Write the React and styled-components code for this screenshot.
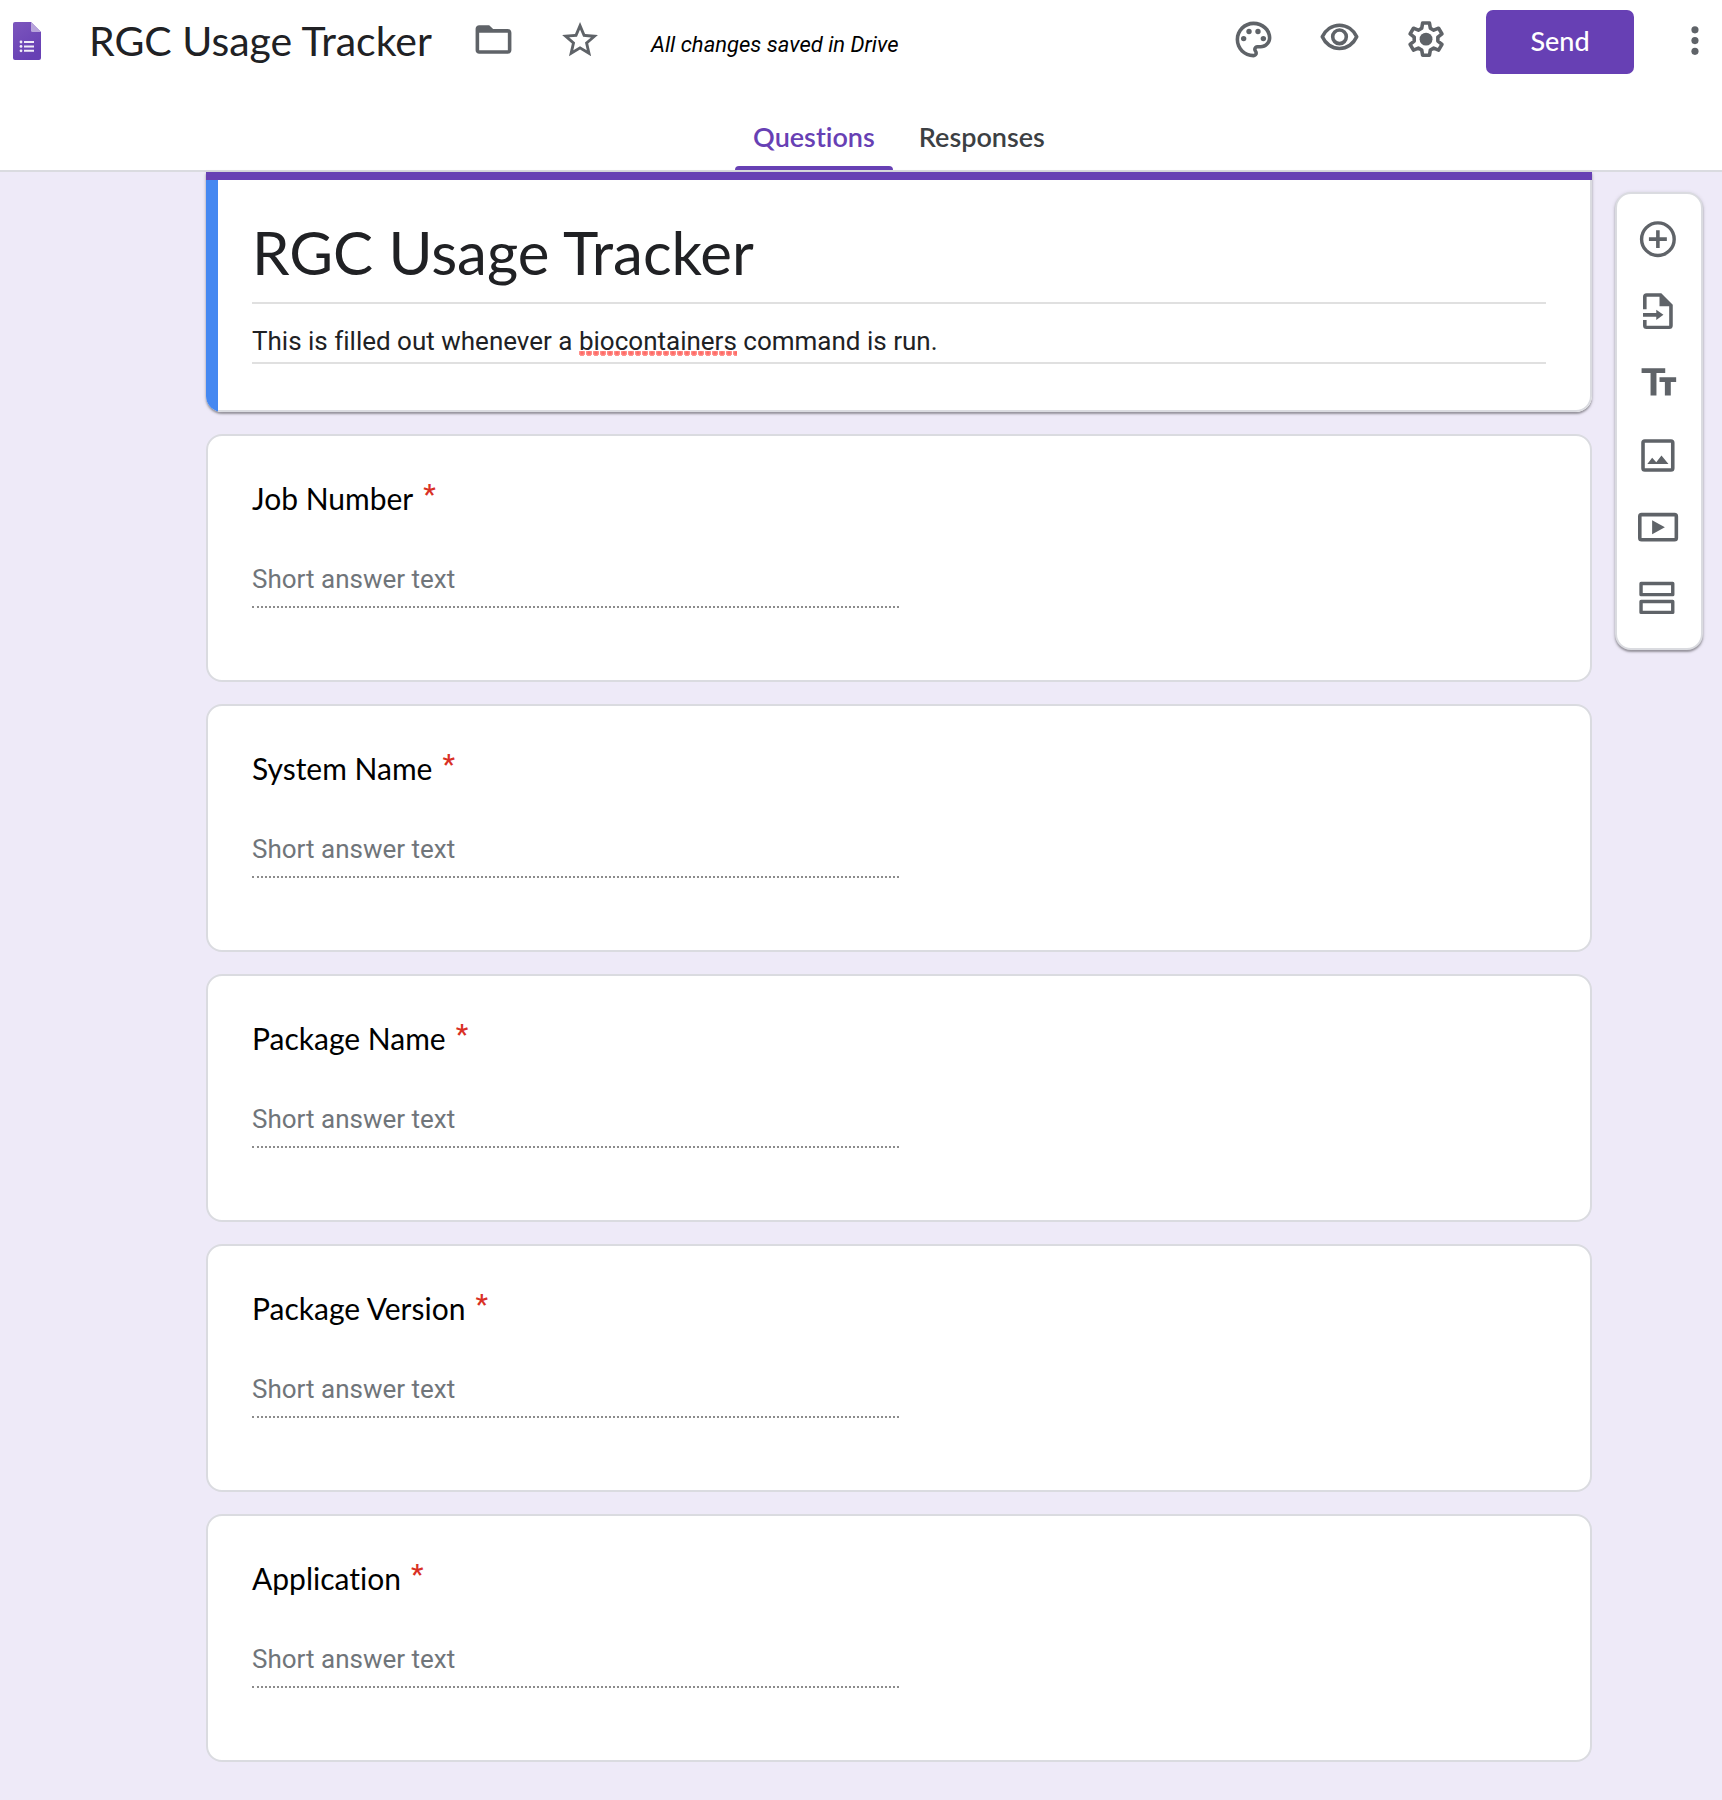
import React, { useState } from "react";
import styled, { createGlobalStyle, ThemeProvider } from "styled-components";

const theme = {
  purple: "#6740b4",
  blue: "#4588f1",
  canvas: "#eeeaf8",
  line: "#dadbe0",
  icon: "#5f6368",
  ink: "#202124",
  display: '"Lato", "Roboto", sans-serif',
  text: '"Roboto", "Liberation Sans", sans-serif',
};

const GlobalStyle = createGlobalStyle`
  *, *::before, *::after { box-sizing: border-box; }
  body {
    margin: 0;
    background: ${theme.canvas};
    font-family: ${theme.text};
    font-variant-ligatures: none;
  }
  button, input {
    font: inherit;
    font-variant-ligatures: none;
  }
`;

const Page = styled.div`
  min-height: 100vh;
  background: ${(p) => p.theme.canvas};
`;

/* ---------- app bar ---------- */

const AppBar = styled.header`
  background: #fff;
  border-bottom: 2px solid ${(p) => p.theme.line};
`;

const TopRow = styled.div`
  display: flex;
  align-items: flex-start;
  padding: 10px 0 0 13px;
`;

const HomeLink = styled.a`
  display: flex;
  align-items: center;
  width: 76px;
  height: 58px;
  padding-bottom: 4px;
  padding-top: 8px;
`;

const DocName = styled.input`
  width: 361px;
  height: 58px;
  padding: 2px 0 0;
  border: 0;
  outline: 0;
  background: transparent;
  color: ${(p) => p.theme.ink};
  font-family: ${(p) => p.theme.display};
  font-size: 41px;
`;

const IconButton = styled.button`
  display: flex;
  align-items: center;
  justify-content: center;
  flex: none;
  width: ${(p) => p.$width || 86}px;
  height: ${(p) => p.$height || 58}px;
  padding: 0;
  border: 0;
  background: transparent;
  color: ${(p) => p.theme.icon};
  cursor: pointer;
`;

const SaveStatus = styled.span`
  padding: 6px 0 0 29px;
  line-height: 58px;
  font-size: 22px;
  font-style: italic;
  color: #000;
  white-space: nowrap;
`;

const Actions = styled.div`
  display: flex;
  align-items: flex-start;
  margin-left: auto;
`;

const SendButton = styled.button`
  width: 148px;
  height: 64px;
  margin: 0 34px 0 18px;
  padding: 0 0 4px;
  border: 0;
  border-radius: 7px;
  background: ${(p) => p.theme.purple};
  color: #fff;
  font-family: ${(p) => p.theme.display};
  font-size: 27px;
  font-weight: 500;
  cursor: pointer;
`;

const Tabs = styled.nav`
  display: flex;
  justify-content: center;
  gap: 8px;
  margin-top: 28px;
  padding-left: 76px;
`;

const Tab = styled.button`
  position: relative;
  height: 68px;
  padding: 0 18px;
  border: 0;
  background: transparent;
  color: ${(p) => (p.$active ? p.theme.purple : "#3c4043")};
  font-family: ${(p) => p.theme.display};
  font-size: 27px;
  font-weight: 600;
  cursor: pointer;

  &::after {
    content: "";
    display: ${(p) => (p.$active ? "block" : "none")};
    position: absolute;
    left: 0;
    right: 0;
    bottom: 0;
    height: 4px;
    border-radius: 4px 4px 0 0;
    background: ${(p) => p.theme.purple};
  }
`;

/* ---------- form canvas ---------- */

const Canvas = styled.main`
  display: flex;
  align-items: flex-start;
  gap: 23px;
  padding: 0 19px 38px 206px;
`;

const Column = styled.div`
  flex: 1;
  min-width: 0;
  display: flex;
  flex-direction: column;
  gap: 22px;
`;

const FormHeader = styled.section`
  border-radius: 0 0 16px 16px;
  background: #fff;
  box-shadow: 0 2px 2px rgba(0, 0, 0, 0.3), 0 1px 4px rgba(0, 0, 0, 0.14);
  overflow: hidden;
`;

const ThemeBar = styled.div`
  height: 8px;
  background: ${(p) => p.theme.purple};
`;

const HeaderInner = styled.div`
  display: flex;
`;

const SelectedBar = styled.div`
  flex: none;
  width: 12px;
  background: ${(p) => p.theme.blue};
`;

const HeaderBody = styled.div`
  flex: 1;
  min-width: 0;
  padding: 38px 44px 46px 34px;
  border: solid ${(p) => p.theme.line};
  border-width: 0 2px 2px 0;
  border-bottom-right-radius: 16px;
`;

const FormTitle = styled.input`
  display: block;
  width: 100%;
  height: 86px;
  padding: 0 0 16px;
  border: 0;
  border-bottom: 2px solid #e0e0e0;
  outline: 0;
  background: transparent;
  color: ${(p) => p.theme.ink};
  font-family: ${(p) => p.theme.display};
  font-size: 60px;
`;

const Description = styled.div`
  margin-top: 22px;
  padding-bottom: 6px;
  border-bottom: 2px solid #e0e0e0;
  outline: 0;
  color: ${(p) => p.theme.ink};
  font-size: 26px;
  line-height: 30px;
`;

const Misspelled = styled.span`
  background: radial-gradient(circle at 3px 2px, #ff6b66 1px, #ff9a96 3px, transparent 3px) left bottom / 7px 5px repeat-x;
`;

const QuestionCard = styled.section`
  padding: 42px 44px 72px;
  border: 2px solid ${(p) => p.theme.line};
  border-radius: 16px;
  background: #fff;
`;

const QuestionLabel = styled.label`
  display: flex;
  align-items: flex-start;
  gap: 10px;
  color: #000;
  font-family: ${(p) => p.theme.display};
  font-size: 30px;
  line-height: 40px;
`;

const Required = styled.span`
  color: #d93025;
  font-family: ${(p) => p.theme.text};
  font-size: 28px;
  font-weight: 500;
  line-height: 34px;
`;

const ShortAnswer = styled.input`
  display: block;
  width: 50%;
  height: 44px;
  margin-top: 46px;
  padding: 0 0 12px;
  border: 0;
  border-bottom: 2px dotted #8c8c8c;
  border-radius: 0;
  outline: 0;
  background: transparent;
  font-size: 26px;

  &::placeholder {
    color: #70757a;
    opacity: 1;
  }
`;

const SideTools = styled.aside`
  display: flex;
  flex-direction: column;
  align-items: center;
  flex: none;
  width: 88px;
  margin-top: 20px;
  padding: 9px 0 13px;
  border: 2px solid ${(p) => p.theme.line};
  border-radius: 16px;
  background: #fff;
  box-shadow: 0 2px 2px rgba(0, 0, 0, 0.3), 0 1px 4px rgba(0, 0, 0, 0.14);
`;

/* ---------- drawings ---------- */

const Icon = ({ box = "0 0 24 24", children }) => (
  <svg width="43" height="43" viewBox={box} fill="currentColor" aria-hidden="true">
    {children}
  </svg>
);

const FormsLogo = () => (
  <svg width="28" height="38" viewBox="0 0 28 38" aria-hidden="true">
    <defs>
      <linearGradient id="logo" x1="0" y1="0" x2="0.5" y2="1">
        <stop offset="0" stopColor="#7c56bd" />
        <stop offset="1" stopColor="#6740b4" />
      </linearGradient>
    </defs>
    <path d="M2 0h16l10 10v26a2 2 0 0 1-2 2H2a2 2 0 0 1-2-2V2a2 2 0 0 1 2-2z" fill="url(#logo)" />
    <path d="M18 0l10 10h-8.500a1.500 1.500 0 0 1-1.500-1.500z" fill="#b8a4db" />
    <g fill="#f1edf8">
      <circle cx="8" cy="20" r="1.400" />
      <circle cx="8" cy="24.400" r="1.400" />
      <circle cx="8" cy="28.800" r="1.400" />
      <path d="M11 19h10v2H11zM11 23.400h10v2H11zM11 27.800h10v2H11z" />
    </g>
  </svg>
);

const FolderIcon = () => (
  <Icon>
    <path
      fillRule="evenodd"
      d="M9.600 4H4c-1.100 0-2 .9-2 2v12c0 1.100.9 2 2 2h16c1.100 0 2-.9 2-2V8.200c0-1.100-.9-2-2-2h-8.200zM4 8.200h16V18H4z"
    />
  </Icon>
);

const StarIcon = () => (
  <Icon box="-0.300 -0.300 24 24">
    <path d="M22 9.240l-7.190-.62L12 2 9.190 8.630 2 9.240l5.460 4.730L5.820 21 12 17.270 18.180 21l-1.630-7.030L22 9.240zM12 15.400l-3.760 2.270 1-4.280-3.320-2.880 4.380-.38L12 6.100l1.710 4.040 4.380.38-3.320 2.880 1 4.280L12 15.400z" />
  </Icon>
);

const PaletteIcon = () => (
  <Icon>
    <path d="M12 22C6.490 22 2 17.510 2 12S6.490 2 12 2s10 4.040 10 9c0 3.310-2.690 6-6 6h-1.770c-.28 0-.5.22-.5.5 0 .12.05.23.13.33.41.47.64 1.060.64 1.670A2.500 2.500 0 0 1 12 22zm0-18c-4.410 0-8 3.590-8 8s3.590 8 8 8c.28 0 .5-.22.5-.5a.54.54 0 0 0-.14-.35c-.41-.46-.63-1.050-.63-1.650a2.500 2.500 0 0 1 2.500-2.500H16c2.210 0 4-1.790 4-4 0-3.860-3.590-7-8-7z" />
    <circle cx="6.500" cy="11.500" r="1.500" />
    <circle cx="9.500" cy="7.500" r="1.500" />
    <circle cx="14.500" cy="7.500" r="1.500" />
    <circle cx="17.500" cy="11.500" r="1.500" />
  </Icon>
);

const EyeIcon = () => (
  <Icon box="0 1.500 24 24">
    <g fill="none" stroke="currentColor" strokeWidth="2" strokeLinejoin="round">
      <path d="M2.400 12C4.100 8.100 7.800 5.500 12 5.500s7.900 2.600 9.600 6.500c-1.700 3.900-5.400 6.500-9.600 6.500S4.100 15.900 2.400 12z" />
      <circle cx="12" cy="12" r="3.800" />
    </g>
  </Icon>
);

const GearIcon = () => (
  <Icon box="-0.300 0.200 24 24">
    <path
      d="M10.100 3h3.800l.5 2.900 1.900 1.100 2.700-1.100 1.900 3.200-2.300 1.800v2.200l2.300 1.800-1.900 3.200-2.700-1.100-1.900 1.100-.5 2.900h-3.800l-.5-2.900-1.900-1.100L5 18.100l-1.900-3.200 2.300-1.800v-2.200L3.100 9.100 5 5.900 7.700 7l1.900-1.100z"
      fill="none"
      stroke="currentColor"
      strokeWidth="2"
      strokeLinejoin="round"
    />
    <circle cx="12" cy="12" r="3.600" />
  </Icon>
);

const MoreIcon = () => (
  <Icon box="0.300 -0.600 24 24">
    <circle cx="12" cy="6" r="2" />
    <circle cx="12" cy="12" r="2" />
    <circle cx="12" cy="18" r="2" />
  </Icon>
);

const TOOL_BOX = "0.900 0.200 24 24";

const AddIcon = () => (
  <Icon box={TOOL_BOX}>
    <circle cx="12" cy="12" r="9.100" fill="none" stroke="currentColor" strokeWidth="1.900" />
    <path d="M11 7h2v4h4v2h-4v4h-2v-4H7v-2h4z" />
  </Icon>
);

const ImportIcon = () => (
  <Icon box={TOOL_BOX}>
    <path d="M3.700 11V4a2 2 0 0 1 2-2h8.200l6.400 6.500V20a2 2 0 0 1-2 2H5.700a2 2 0 0 1-2-2v-3h2v3.100h12.600V9.200h-5.400V3.900H5.700V11z" />
    <path d="M3.700 13.100h7.400v-1.900l4 2.800-4 3v-1.900H3.700z" />
  </Icon>
);

const TextIcon = () => (
  <Icon box={TOOL_BOX}>
    <path d="M2.900 3.700h13.200v2.700h-4.900v12.500H7.900V6.400h-5zM12.900 8.700h9.300v2.700h-3v7.500h-3.300v-7.500h-3z" />
  </Icon>
);

const ImageIcon = () => (
  <Icon box={TOOL_BOX}>
    <rect x="3.700" y="4.100" width="16.600" height="16.200" rx="1" fill="none" stroke="currentColor" strokeWidth="2" />
    <path d="M6.100 17l2.700-3.500 2.300 2.400 2.900-3.700 3.900 4.800z" />
  </Icon>
);

const VideoIcon = () => (
  <Icon box={TOOL_BOX}>
    <rect x="1.900" y="5" width="20.400" height="14" rx="1" fill="none" stroke="currentColor" strokeWidth="2" />
    <path d="M8.800 8.100l7.100 3.900-7.100 3.900z" />
  </Icon>
);

const SectionIcon = () => (
  <Icon box={TOOL_BOX}>
    <g fill="none" stroke="currentColor" strokeWidth="1.900" strokeLinejoin="round">
      <rect x="2.600" y="3.300" width="17.700" height="6.200" />
      <rect x="2.600" y="13.300" width="17.700" height="6.100" />
    </g>
  </Icon>
);

const TOOLS = [
  ["Add question", AddIcon],
  ["Import questions", ImportIcon],
  ["Add title and description", TextIcon],
  ["Add image", ImageIcon],
  ["Add video", VideoIcon],
  ["Add section", SectionIcon],
];

const QUESTIONS = ["Job Number", "System Name", "Package Name", "Package Version", "Application"];

function Question({ id, title }) {
  return (
    <QuestionCard>
      <QuestionLabel htmlFor={id}>
        {title}
        <Required>*</Required>
      </QuestionLabel>
      <ShortAnswer id={id} type="text" placeholder="Short answer text" />
    </QuestionCard>
  );
}

export default function App() {
  const [name, setName] = useState("RGC Usage Tracker");
  const [tab, setTab] = useState("Questions");
  const rename = (e) => setName(e.target.value);

  return (
    <ThemeProvider theme={theme}>
      <GlobalStyle />
      <Page>
        <AppBar>
          <TopRow>
            <HomeLink href="#" aria-label="Forms home">
              <FormsLogo />
            </HomeLink>
            <DocName aria-label="Document name" value={name} onChange={rename} />
            <IconButton aria-label="Move to folder">
              <FolderIcon />
            </IconButton>
            <IconButton aria-label="Star">
              <StarIcon />
            </IconButton>
            <SaveStatus>All changes saved in Drive</SaveStatus>
            <Actions>
              <IconButton aria-label="Customize theme">
                <PaletteIcon />
              </IconButton>
              <IconButton aria-label="Preview">
                <EyeIcon />
              </IconButton>
              <IconButton aria-label="Settings">
                <GearIcon />
              </IconButton>
              <SendButton>Send</SendButton>
              <IconButton $width={54} aria-label="More">
                <MoreIcon />
              </IconButton>
            </Actions>
          </TopRow>
          <Tabs>
            {["Questions", "Responses"].map((label) => (
              <Tab key={label} $active={tab === label} onClick={() => setTab(label)}>
                {label}
              </Tab>
            ))}
          </Tabs>
        </AppBar>

        <Canvas>
          <Column>
            <FormHeader>
              <ThemeBar />
              <HeaderInner>
                <SelectedBar />
                <HeaderBody>
                  <FormTitle aria-label="Form title" value={name} onChange={rename} />
                  <Description
                    role="textbox"
                    aria-label="Form description"
                    contentEditable
                    suppressContentEditableWarning
                    spellCheck={false}
                  >
                    This is filled out whenever a <Misspelled>biocontainers</Misspelled> command is run.
                  </Description>
                </HeaderBody>
              </HeaderInner>
            </FormHeader>
            {QUESTIONS.map((title, i) => (
              <Question key={title} id={`question-${i}`} title={title} />
            ))}
          </Column>
          <SideTools>
            {TOOLS.map(([label, Glyph]) => (
              <IconButton key={label} $width={84} $height={72} aria-label={label}>
                <Glyph />
              </IconButton>
            ))}
          </SideTools>
        </Canvas>
      </Page>
    </ThemeProvider>
  );
}
